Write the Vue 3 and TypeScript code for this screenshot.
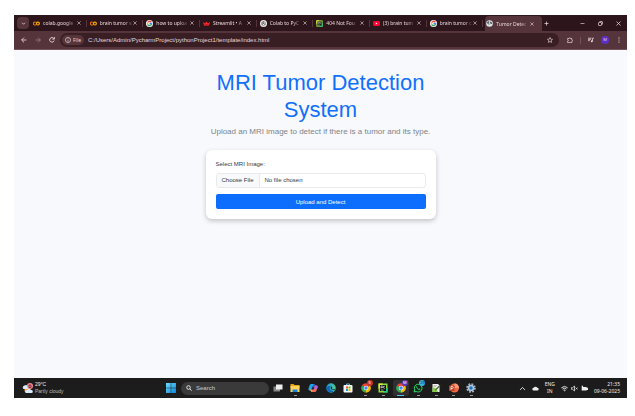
<script setup lang="ts">
import { ref } from 'vue'

interface Tab {
  title: string
  icon: string
  active?: boolean
}

interface DockApp {
  name: string
  icon: string
  running?: boolean
  active?: boolean
  badge?: string
  tone?: string
}

const tabs: Tab[] = [
  { title: 'colab.google', icon: 'colab' },
  { title: 'brain tumor s', icon: 'colab' },
  { title: 'how to uploa', icon: 'google' },
  { title: 'Streamlit • A', icon: 'crown' },
  { title: 'Colab to PyC', icon: 'chatgpt' },
  { title: '404 Not Fou', icon: 'pycharm' },
  { title: '(3) brain tum', icon: 'youtube' },
  { title: 'brain tumor c', icon: 'google' },
  { title: 'Tumor Detec', icon: 'globe', active: true },
]

const apps: DockApp[] = [
  { name: 'Task view', icon: 'taskview' },
  { name: 'File Explorer', icon: 'folder', running: true },
  { name: 'Copilot', icon: 'copilot' },
  { name: 'Edge', icon: 'edge' },
  { name: 'Store', icon: 'store' },
  { name: 'Chrome', icon: 'chrome', running: true, badge: 'S', tone: 'red' },
  { name: 'PyCharm', icon: 'pycharm', running: true },
  { name: 'Chrome profile', icon: 'chrome', running: true, active: true, badge: 'M', tone: 'violet' },
  { name: 'WhatsApp', icon: 'whatsapp', running: true, badge: '29', tone: 'sky' },
  { name: 'Notepad++', icon: 'notepad', running: true },
  { name: 'PowerPoint', icon: 'powerpoint', running: true },
  { name: 'Settings', icon: 'gear', running: true },
]

const address = ref('C:/Users/Admin/PycharmProject/pythonProject1/template/index.html')
const query = ref('')
</script>

<template>
  <svg class="defs" aria-hidden="true">
    <defs>
      <linearGradient id="win-g" x1="0" y1="0" x2="1" y2="1">
        <stop offset="0" stop-color="#6fdcff" /><stop offset="1" stop-color="#0a84d8" />
      </linearGradient>
      <linearGradient id="edge-g" x1="0" y1="0" x2="1" y2="0">
        <stop offset="0" stop-color="#1b8fe0" /><stop offset="1" stop-color="#4fd18b" />
      </linearGradient>
    </defs>
    <symbol id="colab" viewBox="0 0 20 20">
      <g fill="none" stroke-width="3.4"><path d="M8.5 7A4.3 4.3 0 1 0 8.5 13" stroke="#e8710a" /><circle cx="14" cy="10" r="4.2" stroke="#f9ab00" /></g>
    </symbol>
    <symbol id="google" viewBox="0 0 20 20">
      <circle cx="10" cy="10" r="10" fill="#fff" />
      <g fill="none" stroke-width="4"><path d="M15 6A6 6 0 0 0 5 7" stroke="#ea4335" /><path d="M5 7a6 6 0 0 0 0 6" stroke="#fbbc05" /><path d="M5 13a6 6 0 0 0 9 1.500" stroke="#34a853" /><path d="M14 14.500A6 6 0 0 0 16 10H10" stroke="#4285f4" /></g>
    </symbol>
    <symbol id="crown" viewBox="0 0 20 20">
      <path d="M0 6l6 4 4-6 4 6 6-4-3 10H3z" fill="#ff2b2b" /><path d="M3 16h14l-2-4H5z" fill="#b81c26" />
    </symbol>
    <symbol id="chatgpt" viewBox="0 0 20 20">
      <circle cx="10" cy="10" r="10" fill="#eee" />
      <g fill="none" stroke="#333" stroke-width="1.5"><path d="M10 4l5 3v6l-5 3-5-3V7z" /><path d="M10 4v6l5 3M5 7l5 3-5 3" /></g>
    </symbol>
    <symbol id="pycharm" viewBox="0 0 20 20">
      <path d="M1 1h18v18H1z" fill="#8bdc3c" /><path d="M1 1h9L1 12z" fill="#e6ee42" /><path d="M19 8v11h-9z" fill="#25c888" />
      <path d="M4 4h12v12H4z" fill="#111" /><path d="M6 11V6h3a1.5 1.5 0 0 1 0 3H6M14 7a2 2 0 1 0 0 3M6 14h5" fill="none" stroke="#fff" stroke-width="1.2" />
    </symbol>
    <symbol id="youtube" viewBox="0 0 20 20">
      <rect y="3" width="20" height="14" rx="4" fill="#f03" /><path d="M8 7l5 3-5 3z" fill="#fff" />
    </symbol>
    <symbol id="globe" viewBox="0 0 20 20">
      <circle cx="10" cy="10" r="9.5" fill="#dfe3e6" /><path d="M3 6l5-3 2 3-3 3 3 2-1 4-3-4-4-2zM12 4l4 2 2 5-4 1-3-4z" fill="#5c6569" />
    </symbol>
    <symbol id="taskview" viewBox="0 0 20 20">
      <rect x="1" y="7" width="13" height="10" fill="#858585" /><rect x="6" y="3" width="13" height="10" fill="#eee" />
    </symbol>
    <symbol id="folder" viewBox="0 0 20 20">
      <path d="M1 2h6l2 2h10v6H1z" fill="#e8a317" /><path d="M1 6h18v12H1z" fill="#ffd35a" /><path d="M5 13h10v5H5z" fill="#1683d8" />
    </symbol>
    <symbol id="copilot" viewBox="0 0 20 20">
      <path d="M6 2h6l2 5H9l-3 8H3Q0 15 1 11L3 5Q4 2 6 2z" fill="#19a7e8" /><path d="M14 18H8l-2-5h5l3-8h3q3 0 2 4l-2 6q-1 3-3 3z" fill="#f06b58" /><path d="M12 2q2 0 3 3h-2l-2 4H8z" fill="#3657d6" /><path d="M3 13h4l2 5q-3 0-4-3z" fill="#f3c13a" /><path d="M14 5h3q3 0 2 4l-1 3h-6z" fill="#b45be8" />
    </symbol>
    <symbol id="edge" viewBox="0 0 20 20">
      <circle cx="10" cy="10" r="9.5" fill="url(#edge-g)" /><path d="M1 9q4-5 9-2-4 2-2 6 3 4 9 2-4 5-9 4Q1 17 1 9z" fill="#1268b8" /><path d="M10 7q4 1 2 5 3 2 7-1-1 4-5 3-6-1-4-7z" fill="#12232e" />
    </symbol>
    <symbol id="store" viewBox="0 0 20 20">
      <path d="M7 5V2h6v3" fill="none" stroke="#68bff0" stroke-width="1.8" /><rect x="1" y="4" width="18" height="15" rx="2" fill="#f2f6fa" />
      <path d="M6 7h4v4H6z" fill="#f35325" /><path d="M11 7h4v4h-4z" fill="#81bc06" /><path d="M6 12h4v4H6z" fill="#05a6f0" /><path d="M11 12h4v4h-4z" fill="#ffba08" />
    </symbol>
    <symbol id="chrome" viewBox="0 0 20 20">
      <path d="M10 10L1.8 5a9.5 9.5 0 0 1 16.4 0z" fill="#ea4335" /><path d="M10 10l8.2-5A9.5 9.5 0 0 1 10 19.5z" fill="#fbbc05" /><path d="M10 10v9.5A9.5 9.5 0 0 1 1.8 5z" fill="#34a853" />
      <circle cx="10" cy="10" r="4.6" fill="#fff" /><circle cx="10" cy="10" r="3.5" fill="#4285f4" />
    </symbol>
    <symbol id="whatsapp" viewBox="0 0 20 20">
      <path d="M2 18l1.3-4.3A7.8 7.8 0 1 1 6.4 17z" fill="#13261a" stroke="#2fd366" stroke-width="2" /><path d="M7 6q-2 2 1 5t5 3l2-2-3-1-1 1-3-3 1-1z" fill="#2fd366" />
    </symbol>
    <symbol id="notepad" viewBox="0 0 20 20">
      <path d="M3 2h11l3 3v13H3z" fill="#eff2e8" /><path d="M3 9q7-1 11 9H3z" fill="#85ce45" /><path d="M17 4l2 2-8 8-3 1 1-3z" fill="#50684a" /><path d="M5 5h7M5 7h5" stroke="#999" />
    </symbol>
    <symbol id="powerpoint" viewBox="0 0 20 20">
      <circle cx="11" cy="10" r="9" fill="#ed6c47" /><path d="M11 1a9 9 0 0 1 9 9h-9z" fill="#ff9a78" /><rect y="5" width="11" height="11" rx="1" fill="#c43e1c" /><path d="M4 14V7h2.5a2 2 0 0 1 0 4H4" fill="none" stroke="#fff" stroke-width="1.5" />
    </symbol>
    <symbol id="gear" viewBox="0 0 20 20">
      <circle cx="10" cy="10" r="7.6" fill="none" stroke="#9db4c7" stroke-width="4" stroke-dasharray="3.5 2.47" /><circle cx="10" cy="10" r="6.5" fill="#b5c5d2" /><circle cx="10" cy="10" r="3.4" fill="#1578cf" />
    </symbol>
    <symbol id="close" viewBox="0 0 10 10"><path d="M1 1l8 8M9 1L1 9" fill="none" stroke="currentColor" stroke-width="1.5" /></symbol>
  </svg>

  <div class="screen">
    <header class="browser">
      <nav class="strip" aria-label="Tabs">
        <button class="tab-search" aria-label="Search tabs">
          <svg viewBox="0 0 10 10"><path d="M2 3.5l3 3 3-3" fill="none" stroke="currentColor" stroke-width="1.6" /></svg>
        </button>
        <div class="tabs">
          <div v-for="(tab, i) in tabs" :key="i" class="tab" :class="{ active: tab.active }">
            <button class="tab-title">
              <svg class="favicon"><use :href="'#' + tab.icon" /></svg>
              <span>{{ tab.title }}</span>
            </button>
            <button class="tab-close" aria-label="Close tab"><svg><use href="#close" /></svg></button>
          </div>
        </div>
        <button class="tool" aria-label="New tab"><svg viewBox="0 0 10 10"><path d="M5 1v8M1 5h8" stroke="currentColor" stroke-width="1.5" /></svg></button>
        <div class="window-controls">
          <button class="tool" aria-label="Minimize"><svg viewBox="0 0 10 10"><path d="M1 5h8" stroke="currentColor" stroke-width="1.3" /></svg></button>
          <button class="tool" aria-label="Restore"><svg viewBox="0 0 10 10" fill="none" stroke="currentColor" stroke-width="1.4"><rect x="1" y="3" width="6" height="6" rx="1" /><path d="M3 1h5q1 0 1 1v5" /></svg></button>
          <button class="tool" aria-label="Close"><svg><use href="#close" /></svg></button>
        </div>
      </nav>
      <div class="toolbar">
        <div class="history">
          <button class="tool" aria-label="Back"><svg viewBox="0 0 10 10" fill="none" stroke="currentColor" stroke-width="1.4"><path d="M9 5H1M5 1L1 5l4 4" /></svg></button>
          <button class="tool dim" aria-label="Forward"><svg viewBox="0 0 10 10" fill="none" stroke="currentColor" stroke-width="1.4"><path d="M1 5h8M5 1l4 4-4 4" /></svg></button>
          <button class="tool" aria-label="Reload"><svg viewBox="0 0 10 10" fill="none" stroke="currentColor" stroke-width="1.5"><path d="M8.5 6A3.8 3.8 0 1 1 8 2.5M9 0v3.5H5.5" /></svg></button>
        </div>
        <div class="omnibox">
          <button class="scheme">
            <svg viewBox="0 0 10 10" fill="none" stroke="currentColor" stroke-width="1.1"><circle cx="5" cy="5" r="4.3" /><path d="M5 4.5V8M5 2.2v1.2" /></svg>
            File
          </button>
          <input v-model="address" class="address" type="text" aria-label="Address" spellcheck="false" />
          <button class="tool" aria-label="Bookmark"><svg viewBox="0 0 10 10"><path d="M5 .8l1.2 2.8 3 .3L7 6l.7 3L5 7.5 2.3 9 3 6 .8 3.9l3-.3z" fill="none" stroke="currentColor" stroke-width="1.1" /></svg></button>
        </div>
        <div class="extras">
          <button class="tool" aria-label="Extensions"><svg viewBox="0 0 10 10"><path d="M1 2.5h2.500a1.200 1.200 0 0 1 2.400 0H8V5a1.200 1.200 0 0 1 0 2.400V9.300H1V7a1.200 1.200 0 0 0 0-2.400z" fill="none" stroke="currentColor" stroke-width="1.2" /></svg></button>
          <i class="divider"></i>
          <button class="tool" aria-label="Media"><svg viewBox="0 0 10 10"><path d="M0 2h6M0 4h5M0 6h3M7.5 7V2H10" fill="none" stroke="currentColor" stroke-width="1.3" /><circle cx="6.3" cy="7" r="1.6" fill="currentColor" /></svg></button>
          <button class="profile" aria-label="Profile">M</button>
          <button class="tool" aria-label="Menu"><svg viewBox="0 0 10 10" fill="currentColor"><circle cx="5" cy="1.5" r="1" /><circle cx="5" cy="5" r="1" /><circle cx="5" cy="8.5" r="1" /></svg></button>
        </div>
      </div>
    </header>

    <main class="page">
      <div class="container">
        <h1>MRI Tumor Detection System</h1>
        <p class="lead">Upload an MRI image to detect if there is a tumor and its type.</p>
        <form class="card" @submit.prevent>
          <label for="scan">Select MRI Image:</label>
          <input id="scan" class="file" type="file" accept="image/*" />
          <button class="submit" type="submit">Upload and Detect</button>
        </form>
      </div>
    </main>

    <footer class="taskbar">
      <button class="weather">
        <svg viewBox="0 0 22 22"><circle cx="11" cy="14" r="6" fill="#ffad27" /><path d="M3 12a4 4 0 0 1 2-7 5 5 0 0 1 8 3v4zM9 20a3 3 0 0 1 1-6 5 5 0 0 1 8 0 3 3 0 0 1 1 6z" fill="#d9ebff" /><circle cx="16" cy="6" r="6" fill="#f58b98" /><path d="M14 4h4v5h-4z" fill="none" stroke="#5a1822" stroke-width="1.5" /></svg>
        <span>29°C<small>Partly cloudy</small></span>
      </button>
      <div class="dock">
        <button class="start" aria-label="Start"><svg viewBox="0 0 20 20" fill="url(#win-g)"><path d="M0 0h9.500v9.500H0zM10.500 0H20v9.500h-9.500zM0 10.500h9.500V20H0zM10.500 10.500H20V20h-9.500z" /></svg></button>
        <div class="search">
          <svg viewBox="0 0 10 10" fill="none" stroke="currentColor" stroke-width="1.5"><circle cx="4.2" cy="4.2" r="3" /><path d="M6.5 6.5L9.5 9.5" /></svg>
          <input v-model="query" type="text" placeholder="Search" aria-label="Search" />
        </div>
        <div class="apps">
          <button v-for="app in apps" :key="app.name" class="app" :class="{ running: app.running, active: app.active }" :aria-label="app.name">
            <svg><use :href="'#' + app.icon" /></svg>
            <span v-if="app.badge" class="badge" :class="app.tone">{{ app.badge }}</span>
          </button>
        </div>
      </div>
      <div class="tray">
        <svg viewBox="0 0 10 10"><path d="M1.5 7L5 3.5 8.5 7" fill="none" stroke="currentColor" stroke-width="1.3" /></svg>
        <svg viewBox="0 0 10 10"><path d="M2.5 8a2 2 0 0 1 0-4 3 3 0 0 1 5 0 2 2 0 0 1 0 4z" fill="currentColor" /></svg>
        <span class="lang">ENG<br />IN</span>
        <div class="status">
          <svg viewBox="0 0 10 10" fill="none" stroke="currentColor" stroke-width="1.3"><path d="M.5 4q4.500-4 9 0M2.200 5.800q2.800-2.500 5.600 0M4 7.500q1-1 2 0L5 8.500z" /></svg>
          <svg viewBox="0 0 10 10" fill="none" stroke="currentColor" stroke-width="1.1"><path d="M.6 3.8h1.600L5 1.500v7L2.200 6.200H.6zM6.700 3.700l2.600 2.600M9.300 3.700L6.700 6.300" /></svg>
          <svg viewBox="0 0 10 10" fill="currentColor"><path d="M1 1h2v2h5v1h2v3H8v1H1z" /></svg>
        </div>
        <time class="clock">21:35<br />09-06-2025</time>
      </div>
    </footer>
  </div>
</template>

<style>
body {
  background: #fff;
}
</style>

<style scoped>
* {
  box-sizing: border-box;
}
.defs {
  position: absolute;
  width: 0;
  height: 0;
}
.screen {
  display: flex;
  flex-direction: column;
  min-height: 100vh;
  padding: 15px 8px 18px 14px;
  font-family: 'Liberation Sans', Arial, sans-serif;
}
button,
input {
  margin: 0;
  padding: 0;
  border: 0;
  background: none;
  color: inherit;
  font: inherit;
  min-width: 0;
}
svg {
  display: block;
  flex: none;
  width: 6px;
  height: 6px;
}

.browser {
  color: #e8d6d9;
  background: #2d161b;
  font-family: 'Noto Sans', sans-serif;
  font-size: 5px;
}
.strip {
  display: flex;
  align-items: center;
  height: 16px;
}
.tab-search {
  display: grid;
  place-items: center;
  width: 12px;
  height: 12px;
  margin: 0 3px;
  border-radius: 4px;
  background: #55353b;
}
.tab-search svg {
  width: 5px;
  height: 5px;
}
.tabs {
  display: grid;
  grid-template-columns: repeat(9, minmax(0, 1fr));
  flex: 1;
  height: 16px;
}
.tab {
  display: flex;
  align-items: center;
  padding: 0 8px 0 1px;
  background: linear-gradient(#55353b, #55353b) right 2px center / 1px 7px no-repeat;
}
.tab.active {
  height: 15px;
  margin-top: 1px;
  border-radius: 4px 4px 0 0;
  background: #55353b;
}
.tab-title {
  display: flex;
  align-items: center;
  gap: 3px;
  flex: 1;
  white-space: nowrap;
}
.tab-title span {
  flex: 1;
  text-align: left;
  mask-image: linear-gradient(90deg, #000 75%, rgb(0 0 0 / 20%));
}
.favicon {
  width: 7px;
  height: 7px;
}
.tab-close {
  margin-left: 3px;
}
.tab-close svg {
  width: 4px;
  height: 4px;
}
.tool {
  display: grid;
  place-items: center;
  width: 8px;
  height: 12px;
}
.tool svg {
  width: 5px;
  height: 5px;
}
.dim {
  opacity: 0.45;
}
.window-controls {
  display: flex;
  gap: 10px;
  padding: 0 5px 0 28px;
}
.toolbar {
  display: flex;
  align-items: center;
  gap: 4px;
  height: 19px;
  padding: 0 4px 0 6px;
  background: #55353b;
  border-bottom: 1px solid #74545a;
}
.history {
  display: flex;
  gap: 6px;
}
.omnibox {
  display: flex;
  align-items: center;
  flex: 1;
  height: 14px;
  padding: 0 5px 0 2px;
  border-radius: 7px;
  background: #391f24;
}
.scheme {
  display: flex;
  align-items: center;
  gap: 2px;
  height: 10px;
  padding: 0 3px;
  border-radius: 5px;
  background: #55353b;
}
.address {
  flex: 1;
  margin-left: 4px;
  font-family: 'Liberation Sans', Arial, sans-serif;
  font-size: 6px;
}
.omnibox svg,
.extras svg,
.history svg {
  width: 6px;
  height: 6px;
}
.extras {
  display: flex;
  align-items: center;
  gap: 6px;
  padding-left: 3px;
}
.divider {
  width: 1px;
  height: 7px;
  background: #74545a;
}
.profile {
  width: 8px;
  height: 8px;
  border-radius: 50%;
  background: #5b30c8;
  font-size: 4px;
  line-height: 8px;
  text-align: center;
}

.page {
  flex: 1;
  padding: 19px 16px;
  background: #f8f9fc;
}
.container {
  max-width: 230px;
  margin: 0 auto;
}
h1 {
  margin: 0;
  color: #1170fb;
  font-size: 22px;
  font-weight: 400;
  line-height: 27px;
  text-align: center;
}
.lead {
  margin: 3px 0 12px;
  color: #7c848b;
  font-size: 8px;
  line-height: 12px;
  text-align: center;
  white-space: nowrap;
}
.card {
  display: flex;
  flex-direction: column;
  padding: 10px;
  border-radius: 6px;
  background: #fff;
  box-shadow: 0 2px 5px rgb(0 0 0 / 22%);
  color: #353a3f;
  font-size: 6px;
}
label {
  margin-bottom: 4px;
  line-height: 9px;
}
.file {
  width: 100%;
  height: 15px;
  border: 1px solid #e8eaed;
  border-radius: 3px;
  line-height: 13px;
  overflow: hidden;
}
.file::file-selector-button {
  height: 13px;
  margin: 0 5px 0 0;
  padding: 0 5px;
  border: 0;
  border-right: 1px solid #e8eaed;
  background: #f8f9fa;
  color: inherit;
  font: inherit;
}
.submit {
  height: 15px;
  margin-top: 6px;
  border-radius: 2px;
  background: #0d6efd;
  color: #fff;
}

.taskbar {
  display: grid;
  grid-template-columns: 1fr auto 1fr;
  align-items: center;
  height: 20px;
  background: #1c1c1c;
  color: #eee;
  font-family: 'Noto Sans', sans-serif;
  font-size: 5px;
  line-height: 7px;
}
.weather {
  display: flex;
  align-items: center;
  gap: 2px;
  padding-left: 8px;
  font-family: 'Liberation Sans', Arial, sans-serif;
  text-align: left;
}
.weather svg {
  width: 11px;
  height: 11px;
}
.weather small {
  display: block;
  color: #bbb;
  font-size: 5px;
}
.dock {
  display: flex;
  align-items: center;
  padding-left: 5px;
}
.start svg {
  width: 10px;
  height: 10px;
}
.search {
  display: flex;
  align-items: center;
  gap: 4px;
  width: 88px;
  height: 13px;
  margin: 0 0 0 5px;
  padding: 0 5px;
  border-radius: 7px;
  background: #3a3a3a;
}
.search input {
  flex: 1;
  font-family: 'Liberation Sans', Arial, sans-serif;
  font-size: 6px;
}
.search input::placeholder {
  color: #ccc;
}
.apps {
  display: grid;
  grid-template-columns: repeat(12, 1fr);
  justify-items: center;
  width: 211px;
}
.app {
  position: relative;
  display: grid;
  place-items: center;
  width: 16px;
  height: 16px;
  border-radius: 2px;
}
.app svg {
  width: 10px;
  height: 10px;
}
.app.active {
  background: #303030;
}
.app.running::after {
  content: '';
  position: absolute;
  bottom: 0;
  width: 3px;
  height: 1px;
  background: #999;
}
.app.active::after {
  width: 7px;
  background: #5ac1f5;
}
.badge {
  position: absolute;
  top: 0;
  right: 1px;
  min-width: 6px;
  height: 6px;
  border-radius: 3px;
  color: #fff;
  font-size: 4px;
  line-height: 6px;
  text-align: center;
}
.red {
  background: #c5352a;
}
.violet {
  background: #5b36b8;
}
.sky {
  background: #3fb2e8;
  color: #123;
}
.tray {
  display: flex;
  align-items: center;
  justify-content: flex-end;
  gap: 6px;
  padding-right: 7px;
}
.tray svg {
  width: 7px;
  height: 7px;
}
.lang {
  text-align: center;
}
.status {
  display: flex;
  gap: 3px;
}
.clock {
  text-align: right;
}
</style>
